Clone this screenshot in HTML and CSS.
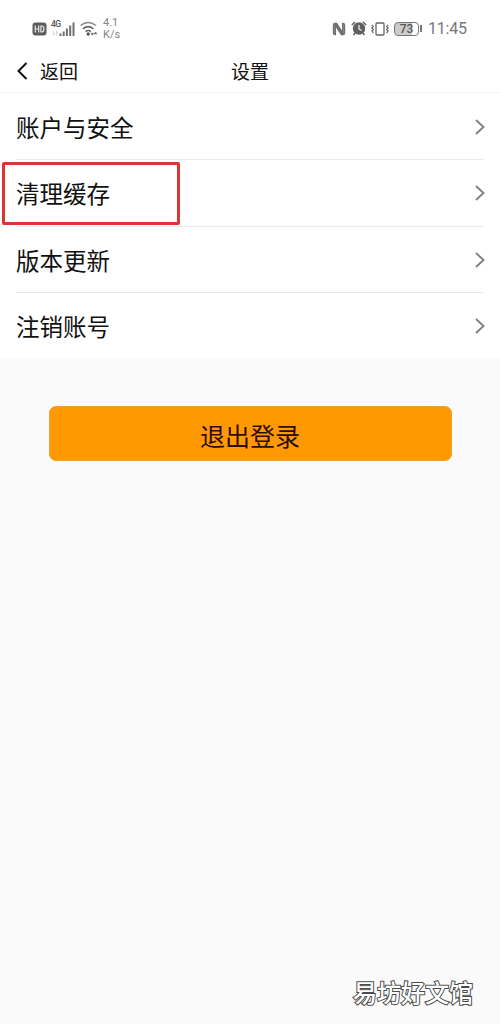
FILE: index.html
```html
<!DOCTYPE html>
<html lang="zh-CN">
<head>
<meta charset="utf-8">
<title>设置</title>
<link rel="stylesheet" href="styles.css">
</head>
<body>
<div class="screen">
  <div class="status">
    <div class="status-left">
      <svg class="hd" width="15" height="14" viewBox="0 0 15 14"><rect x=".5" y=".5" width="14" height="13" rx="3" fill="#5c5c5c"/><path d="M3.300 3.500v7M6.700 3.500v7M3.300 7h3.400M8.900 4v6h1q2 0 2-3t-2-3z" fill="none" stroke="#e8e8e8" stroke-width="1.200"/></svg>
      <div class="cell">
        <span class="net">4G</span>
        <svg class="bars" width="24" height="16" viewBox="0 0 24 16"><path d="M9.500 12.500v2.500M12.700 10.500v4.500M15.900 7.500v7.500M19.200 4.500v10.500M22.500 1.500v13.500" stroke="#707070" stroke-width="2"/><path d="M3 10v4M1.500 12l1.500 2M5.500 14v-4l1.500 2" stroke="#ccc" stroke-width=".8" fill="none"/></svg>
      </div>
      <svg class="wifi" width="18" height="16" viewBox="0 0 18 16"><g fill="none" stroke="#666" stroke-width="1.500"><path d="M.5 4.500Q8.200-1.500 16 4.500" stroke="#8a8a8a"/><path d="M3 7.800q5.200-4.300 10.400 0"/><path d="M5.500 10.600q2.700-2.200 5.400 0"/></g><circle cx="8.200" cy="13" r="1.700" fill="#555"/><path d="M11 12.200h2.800l-1.400 2zM14.200 13h2.800l-1.400-2z" fill="#666" stroke="#666" stroke-width=".5"/></svg>
      <div class="speed">4.1<br>K/s</div>
    </div>
    <div class="status-right">
      <svg class="nfc" width="14" height="14" viewBox="0 0 14 14"><path d="M3 .7Q.8.700.8 3v8q0 2.300 2.200 2.300h1V5.500l5 7.800h2q2.200 0 2.200-2.300V3q0-2.300-2.200-2.300h-1v7.800L5 .7z" fill="#707070"/><path d="M2.600 3v8M11.400 3v8" stroke="#999" stroke-width=".6"/></svg>
      <svg class="alarm" width="16" height="15" viewBox="0 0 16 15"><circle cx="8" cy="7.500" r="6.200" fill="#606060"/><path d="M.8 4L4 1M15.200 4L12 1M4 12l-1.500 2M12 12l1.500 2" stroke="#606060" stroke-width="1.500"/><path d="M8 4v4l2.500 1.500" fill="none" stroke="#fff" stroke-width="1.100"/></svg>
      <svg class="vibrate" width="18" height="14" viewBox="0 0 18 14"><rect x="5" y="1" width="8" height="12" rx="1" fill="none" stroke="#666" stroke-width="1.300"/><path d="M.8 3l1.500 1.500L1 6l1.300 1.500L1 9l1.300 2M17.200 3l-1.500 1.500L17 6l-1.300 1.500L17 9l-1.300 2" fill="none" stroke="#666" stroke-width="1.300"/></svg>
      <div class="battery"><span>73</span></div>
      <div class="time">11:45</div>
    </div>
  </div>
  <header class="header">
    <div class="back">
      <svg width="12" height="20" viewBox="0 0 12 20"><path d="M10.500 2L2.500 10l8 8" fill="none" stroke="#111" stroke-width="2"/></svg>
      <span>返回</span>
    </div>
    <h1 class="title">设置</h1>
  </header>
  <main>
    <div class="list">
      <div class="row"><span>账户与安全</span><svg class="chev" width="12" height="18" viewBox="0 0 12 18"><path d="M2 2l7.500 7L2 16" /></svg></div>
      <div class="row row-marked"><span>清理缓存</span><svg class="chev" width="12" height="18" viewBox="0 0 12 18"><path d="M2 2l7.500 7L2 16" /></svg></div>
      <div class="row"><span>版本更新</span><svg class="chev" width="12" height="18" viewBox="0 0 12 18"><path d="M2 2l7.500 7L2 16" /></svg></div>
      <div class="row"><span>注销账号</span><svg class="chev" width="12" height="18" viewBox="0 0 12 18"><path d="M2 2l7.500 7L2 16" /></svg></div>
    </div>
    <button class="logout">退出登录</button>
  </main>
  <div class="watermark">易坊好文馆</div>
</div>
</body>
</html>
```
FILE: styles.css
```css
*, *::before, *::after { box-sizing: border-box; }
body { margin: 0; font-family: "Noto Sans CJK SC", sans-serif; color: #111; }
.screen { position: relative; width: 500px; height: 1024px; background: #fafafa; overflow: hidden; }
svg { display: block; flex: none; }

.status { height: 50px; padding: 7px 33px 0 32px; display: flex; justify-content: space-between; background: #fff; color: #777; font-family: Roboto, sans-serif; }
.status-left, .status-right { display: flex; align-items: center; height: 43px; }
.cell { position: relative; margin-left: 4px; }
.net { position: absolute; left: 0; top: -1px; font-size: 8.5px; line-height: 9px; font-weight: 500; color: #555; letter-spacing: -0.5px; }
.wifi { margin-left: 5px; }
.speed { margin-left: 5px; padding-top: 1px; font-size: 11px; line-height: 12.5px; color: #858585; }
.nfc { margin-right: 1px; }
.alarm { margin-left: 4px; }
.vibrate { margin-left: 4px; }
.battery { position: relative; width: 25px; height: 14px; margin-left: 5px; border: 1.5px solid #777; border-radius: 4px; background: linear-gradient(90deg, #ccc 73%, #fff 73%); display: flex; align-items: center; justify-content: center; font-size: 12px; line-height: 12px; font-weight: 500; color: #555; }
.battery::after { content: ""; position: absolute; right: -4px; top: 2px; width: 2px; height: 7px; background: #777; }
.time { width: 39px; margin-left: 9px; padding-top: 1px; font-size: 16px; line-height: 20px; letter-spacing: -0.2px; color: #777; white-space: nowrap; }

.header { position: relative; height: 43px; padding-bottom: 1px; background: #fff; border-bottom: 1px solid #f3f3f3; display: flex; align-items: center; justify-content: center; }
.back { position: absolute; left: 16px; top: 0; height: 41px; display: flex; align-items: center; gap: 12px; font-size: 19px; }
.title { margin: 0; font-size: 19px; font-weight: 400; }

.list { background: #fff; }
.row { position: relative; height: 66.5px; margin-left: 16px; margin-right: 16px; padding-top: 1px; border-bottom: 1px solid #e9e9e9; display: flex; align-items: center; justify-content: space-between; font-size: 23.5px; line-height: 36px; }
.row:first-child { height: 67px; }
.row:last-child { height: 65px; padding-top: 1px; border-bottom: 0; }
.row-marked::before { content: ""; position: absolute; left: -14px; top: 2px; width: 178px; height: 63px; border: 3px solid #dc3535; border-radius: 2px; }
.chev path { fill: none; stroke: #808080; stroke-width: 1.9; }
.chev { margin-right: -2px; }

.logout { display: flex; align-items: center; justify-content: center; width: 403px; height: 55px; margin: 48px 0 0 48.5px; padding: 2px 0 0; border: 1px solid #efa030; border-radius: 7px; background: #ff9902; color: #2c0d05; font: 25px/36px "Noto Sans CJK SC", sans-serif; }

.watermark { position: absolute; left: 353px; top: 974px; font-size: 24px; line-height: 36px; font-weight: 500; color: #fff; -webkit-text-stroke: 2px #4a4a4a; paint-order: stroke fill; white-space: nowrap; }
```
